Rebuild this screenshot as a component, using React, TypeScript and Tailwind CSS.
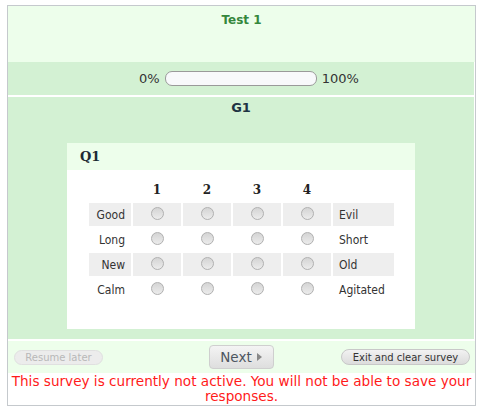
import React from "react";

const rows = [
  { left: "Good", right: "Evil", shaded: true },
  { left: "Long", right: "Short", shaded: false },
  { left: "New", right: "Old", shaded: true },
  { left: "Calm", right: "Agitated", shaded: false },
];

function Radio() {
  return (
    <span className="block w-[13px] h-[13px] rounded-full border border-[#b0b0b0] bg-gradient-to-b from-[#d4d4d4] to-[#ececec]" />
  );
}

export default function App() {
  return (
    <div className="w-[484px] h-[413px] bg-white pt-[5px] pl-[7px] font-['DejaVu_Sans',Verdana,sans-serif] text-[13px] text-[#333]">
      <div className="w-[469px] h-[401px] border border-[#c5c9cd] bg-white flex flex-col">
        {/* header */}
        <div className="h-[56px] bg-[#edfeeb] pt-[5px] text-center">
          <h1 className="font-bold text-[12px] leading-[18px] text-[#35873c]">Test 1</h1>
        </div>

        {/* progress */}
        <div className="h-[33px] bg-[#d3f1d3] mr-px pl-[16px] flex items-center justify-center gap-[5px] text-[13px] text-[#333]">
          <span>0%</span>
          <div className="w-[152px] h-[15px] rounded-[7px] border border-[#9a9a9a] bg-[#f8f9fb]" />
          <span>100%</span>
        </div>

        {/* group */}
        <div className="mt-[2px] h-[242px] bg-[#d3f1d3] mr-px flex flex-col items-center">
          <h2 className="font-bold text-[13px] leading-[18px] text-[#1e3443] mt-[2px]">G1</h2>
          <div className="mt-[26px] w-[348px] h-[186px] bg-white">
            <div className="h-[27px] bg-[#edfeeb] pl-[13px] flex items-center font-['DejaVu_Serif',Georgia,serif] font-bold text-[13px] text-[#1d2a33]">
              Q1
            </div>
            <div className="pl-[22px] pt-[8px] font-['DejaVu_Sans_Condensed','DejaVu_Sans',sans-serif] text-[12px] text-[#333]">
              <div className="grid grid-cols-[42px_48px_48px_48px_48px_61px] gap-x-[2px] gap-y-[2px]">
                <div className="h-[23px]" />
                {[1, 2, 3, 4].map((n) => (
                  <div
                    key={n}
                    className="h-[23px] flex items-center justify-center font-['DejaVu_Serif',Georgia,serif] font-bold text-[12px] text-[#222]"
                  >
                    {n}
                  </div>
                ))}
                <div className="h-[23px]" />
                {rows.map((r) => (
                  <React.Fragment key={r.left}>
                    <div
                      className={`h-[23px] flex items-center justify-end pr-[6px] ${r.shaded ? "bg-[#eeeeee]" : ""}`}
                    >
                      {r.left}
                    </div>
                    {[1, 2, 3, 4].map((n) => (
                      <div
                        key={n}
                        className={`h-[23px] flex items-center justify-center pb-[2px] ${r.shaded ? "bg-[#eeeeee]" : ""}`}
                      >
                        <Radio />
                      </div>
                    ))}
                    <div
                      className={`h-[23px] flex items-center pl-[6px] ${r.shaded ? "bg-[#eeeeee]" : ""}`}
                    >
                      {r.right}
                    </div>
                  </React.Fragment>
                ))}
              </div>
            </div>
          </div>
        </div>

        {/* navigation */}
        <div className="mt-[2px] h-[32px] bg-[#edfeeb] flex items-center justify-between pl-[6px] pr-[5px]">
          <button
            disabled
            className="w-[89px] h-[15px] rounded-full border border-[#e0e0e0] bg-[#ececec] text-[10px] leading-[13px] text-[#b8b8b8]"
          >
            Resume later
          </button>
          <button className="ml-[38px] w-[65px] h-[24px] rounded-[4px] border border-[#cfcfcf] bg-gradient-to-b from-[#f4f4f4] to-[#dedede] text-[13.5px] text-[#4d5560] flex items-center justify-center gap-[5px]">
            Next
            <svg width="5" height="8" viewBox="0 0 5 8">
              <path d="M0 0 L5 4 L0 8 Z" fill="#888" />
            </svg>
          </button>
          <button className="w-[129px] h-[16px] rounded-full border border-[#c8c8c8] bg-gradient-to-b from-[#f2f2f2] to-[#dcdcdc] text-[10px] leading-[13px] text-[#333]">
            Exit and clear survey
          </button>
        </div>

        {/* warning */}
        <p className="pt-[1px] text-center text-[13.6px] leading-[15px] text-[#ff1a1a]">
          This survey is currently not active. You will not be able to save your responses.
        </p>
      </div>
    </div>
  );
}
